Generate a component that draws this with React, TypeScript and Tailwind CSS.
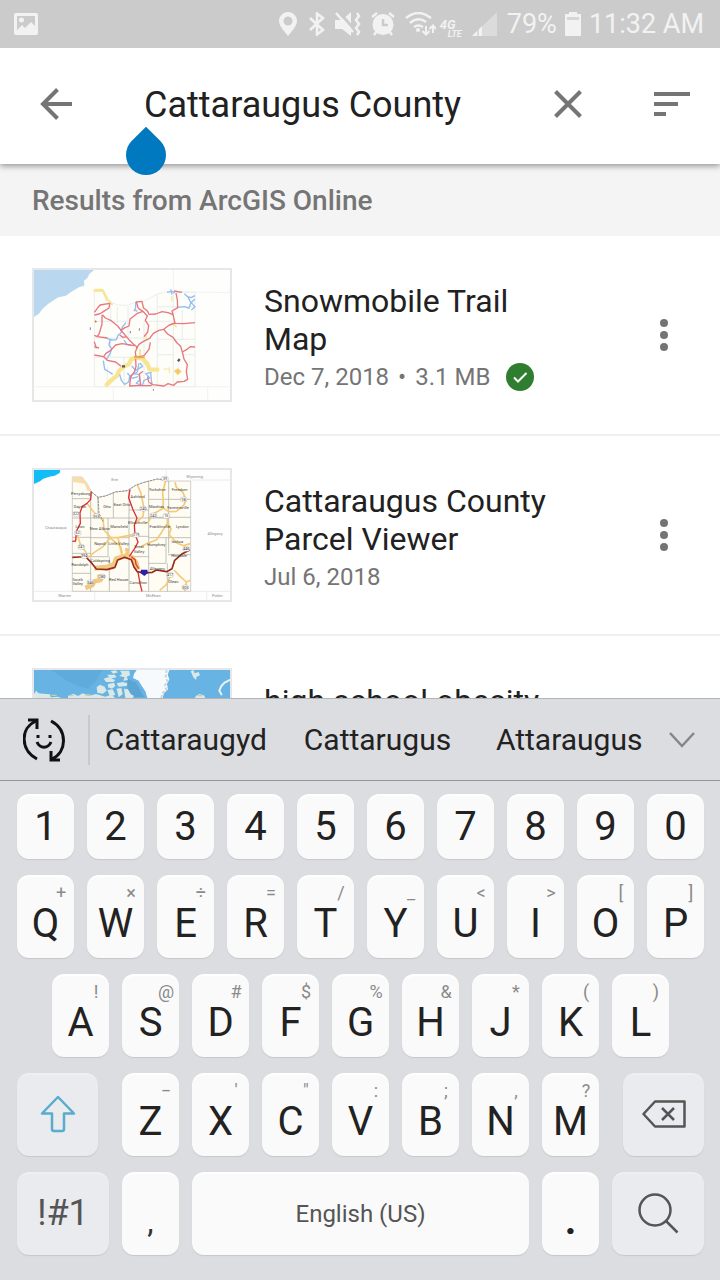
import React, { useState } from 'react';

const numberKeys = ['1', '2', '3', '4', '5', '6', '7', '8', '9', '0'];

const topKeys = [
  ['Q', '+'], ['W', '×'], ['E', '÷'], ['R', '='], ['T', '/'],
  ['Y', '_'], ['U', '<'], ['I', '>'], ['O', '['], ['P', ']'],
];

const homeKeys = [
  ['A', '!'], ['S', '@'], ['D', '#'], ['F', '$'], ['G', '%'],
  ['H', '&'], ['J', '*'], ['K', '('], ['L', ')'],
];

const bottomKeys = [
  ['Z', '−'], ['X', "'"], ['C', '"'], ['V', ':'], ['B', ';'], ['N', ','], ['M', '?'],
];

const suggestions = ['Cattaraugyd', 'Cattarugus', 'Attaraugus'];

// x, y and name of every label on the parcel map
const parcelLabels: [number, number, string][] = [
  [170, 104, 'Perrysburg'], [168, 143, 'Dayton'], [249, 145, 'Otto'], [294, 137, 'East Otto'],
  [341, 115, 'Ashford'], [400, 93, 'Yorkshire'], [467, 93, 'Freedom'], [398, 145, 'Machias'],
  [462, 147, 'Farmersville'], [168, 203, 'Leon'], [228, 210, 'New Albion'], [285, 205, 'Mansfield'],
  [341, 193, 'Ellicottville'], [408, 203, 'Franklinville'], [475, 205, 'Lyndon'], [228, 255, 'Napoli'],
  [284, 255, 'Little Valley'], [345, 264, 'Great'], [345, 278, 'Valley'], [397, 257, 'Humphrey'],
  [460, 249, 'Ischua'], [465, 290, 'Hinsdale'], [168, 317, 'Randolph'], [229, 305, 'Coldspring'],
  [400, 329, 'Allegany'], [448, 370, 'Olean'], [161, 363, 'South'], [161, 376, 'Valley'],
  [284, 363, 'Red House'], [343, 371, 'Carrollton'],
];

const neighbours: [number, number, string][] = [
  [272, 62, 'Erie'], [512, 53, 'Wyoming'], [95, 207, 'Chautauqua'], [573, 224, 'Allegany'],
  [122, 411, 'Warren'], [388, 411, 'McKean'], [580, 410, 'Potter'],
];

const routeShields: [number, number, string][] = [
  [423, 56, '39'], [479, 118, '98'], [357, 146, '240'], [388, 166, '242'], [427, 168, '16'],
  [156, 162, '322'], [217, 169, '353'], [161, 219, '62'], [336, 225, '219'], [172, 261, '241'],
  [181, 288, '394'], [234, 350, '280'], [199, 367, '346'], [438, 345, '417'], [487, 267, '446'],
  [484, 382, '305'],
];

const SnowmobileMap = () => (
  <svg viewBox="30 30 588 390" className="block h-full w-full" fill="none" aria-hidden="true">
    <rect x="30" y="30" width="588" height="390" fill="#fefefd" />
    <path d="M30 30H210L196 42 190 54 180 62 181 77 165 82 140 97 126 107 103 112 91 119 72 132 55 147 46 160 30 171Z" fill="#b9d8ef" />
    <path d="M448 30V95L618 98M618 80V98M30 380H618M268 380V420M551 380V420" stroke="#ebebec" strokeWidth="2" />
    <path d="M211 92H234L248 107 258 126 283 135 310 136 340 124 358 124 400 102 430 94 458 97H513V380H211Z" fill="#fdfdf9" stroke="#e4e7e6" strokeWidth="2" />
    <path d="M260 130V184M211 184H312M312 138V240M280 140V190M211 234H360M360 184V380M400 102V380M448 97V185M360 184H448M475 150V240M448 190V380M400 238H513M260 234V290M211 292H330M300 292V380M400 284H448M480 284H513M250 320V380M400 140H513" stroke="#e1e5e3" strokeWidth="2" />
    <g stroke="#f8e592" strokeLinejoin="round" strokeLinecap="round">
      <path d="M213 91H234" strokeWidth="9" />
      <path d="M238 94L249 119" strokeWidth="7" />
      <path d="M248 374L264 359 279 347 286 331 300 320 314 313 322 298 336 292 357 297 370 312 376 328 400 329" strokeWidth="13" />
      <path d="M348 293V270M255 122L264 133M448 190L456 199" strokeWidth="6" />
      <path d="M436 323V338M420 327H434" strokeWidth="3" />
      <path d="M451 332L462 325 472 334 462 345Z" fill="#f5c66f" strokeWidth="3" />
      <path d="M366 225V240M443 110V122" strokeWidth="4" />
    </g>
    <g stroke="#93bdf3" strokeWidth="4" strokeLinejoin="round">
      <path d="M248 235L264 240 277 239 282 226 291 219 295 201 306 188M258 240L255 255 263 266 258 281 247 299" />
      <path d="M330 154L335 143 335 126M340 154L330 148M429 97L445 94 452 100M440 88L444 104" />
      <path d="M481 101L491 110 501 113 513 107M459 142L482 140 495 145 501 127 513 140 502 150M491 110L501 128 513 117" />
      <path d="M238 302L242 328 256 336 266 343M287 343L292 361 302 373 314 366 317 349 340 336 345 309" />
      <path d="M330 341L346 344 347 360 337 370 355 377 360 361 377 354 365 341 383 337M323 318L335 331 356 319 348 309M300 240L309 254 322 257M310 340L325 355 342 350M380 340L384 376" />
    </g>
    <g stroke="#e9767d" strokeWidth="4" strokeLinejoin="round">
      <path d="M211 157L220 145 228 135 257 130 255 144 238 155 226 162 211 165M235 164L244 174 260 181 270 189 281 198 289 208 303 225 315 239 328 252 340 262 334 276 336 292" />
      <path d="M289 212L303 203 315 198 318 177 330 168 340 160 357 154 343 145 337 126 354 124 358 143 371 154 375 163 396 162 414 155 432 158 447 164 444 153 461 143 460 120 456 99" />
      <path d="M357 154L370 168 364 181 374 197 371 216 360 230M447 164L453 189 436 195 419 208 405 211 388 220 377 235 357 245 345 253 337 265M453 190L480 191 513 188" />
      <path d="M419 208L431 222 447 232 459 249 470 259 475 276 489 268 499 260 513 261M475 276L480 297 490 314 487 335 491 358 480 364 460 366 449 376 432 371 420 378 386 374 374 366" />
      <path d="M234 165L234 192 226 220 220 230 211 226M220 230L250 234M211 260L225 264M211 285L239 290 246 280 260 271 275 255 294 251 332 257M239 290L250 301 275 306 291 319M335 297L336 320 331 336 320 350 317 378 350 376 346 342 357 334M350 376L383 377M336 292L360 287 375 268 379 247" />
      <path d="M287 225L297 232 307 230M450 93L474 97M217 265L211 245M374 366L371 350" />
    </g>
    <path d="M199 202V210M346 205V212M319 213V220M388 387V392" stroke="#7f80ae" strokeWidth="3" />
    <path d="M213 182L217 187" stroke="#d97a3c" strokeWidth="5" />
    <path d="M294 319H303M462 304L467 297" stroke="#555760" strokeWidth="7" />
    <path d="M330 292H362" stroke="#eba950" strokeWidth="5" />
  </svg>
);

const ParcelMap = () => (
  <svg viewBox="30 30 588 390" className="block h-full w-full" fill="none" aria-hidden="true">
    <rect x="30" y="30" width="588" height="390" fill="#fefefe" />
    <path d="M30 30H109L107 39 92 47 76 50 58 56 48 64 30 72Z" fill="#12bdf5" />
    <path d="M427 30V58M618 60H500M30 394H618M212 394V420M548 394V420" stroke="#e2e2e2" strokeWidth="2" />
    <path d="M145 51H174L190 72 203 96 222 112 244 108 274 96 310 92 335 76 360 67 400 57 425 63H500V394H145Z" fill="#fffdf3" stroke="#b9b9b3" strokeWidth="2" />
    <path d="M145 51H174L190 72 203 96 190 92 182 71 145 65Z" fill="#f5deaa" />
    <path d="M145 116H200M200 94V310M222 112V174M268 98V174M145 174H432M315 92V394M374 65V394M434 63V280M252 174V290M200 233H315M315 229H374M315 150H374M374 118H500M374 172H500M145 232H200M374 233H500M426 233V310M200 290H252M256 290V394M145 340H200M200 310V394M315 290H374M374 310H426M145 280H200M432 284H500M430 310V394" stroke="#a5a69f" strokeWidth="2" />
    <g stroke="#f3ca78" strokeWidth="5" strokeLinejoin="round">
      <path d="M340 75L350 97 355 120 360 145 357 169 336 188M425 63L416 95 418 130 414 147 391 160 369 190M416 143L434 155 457 154 479 136 486 121 477 97 457 82 453 67" />
      <path d="M430 170L430 190 414 215 397 240 374 248 350 260M430 188L441 207 435 224 459 249 479 257 499 251M237 174L240 210 260 232 282 233 330 223" />
      <path d="M260 232L238 259 211 277 192 292M282 233L287 257 294 288M160 225L170 256 187 278M189 130L210 157 236 180M260 235L290 260 295 280M450 330L469 350 487 366 499 361M487 366L482 394M438 350L427 374 407 391" />
    </g>
    <g stroke="#f0ca80" strokeLinejoin="round">
      <path d="M211 325L250 321 270 313 277 296 300 289 323 292 336 308 342 329" strokeWidth="15" />
      <path d="M225 343L230 360 212 364 205 375 184 384" strokeWidth="14" />
      <path d="M303 268L312 270 307 285" strokeWidth="10" />
    </g>
    <g strokeWidth="4" strokeLinejoin="round">
      <path d="M202 94L200 118 189 130 175 139 168 158 169 190 157 214 155 243 145 244M318 88L314 113 327 149 339 174 331 196 333 223 342 246 333 264 316 289M342 336L348 370 354 394" stroke="#df2d35" />
      <path d="M145 292L166 291 186 291 201 307 217 327 249 329 273 322 281 300 302 292 322 299 330 321 340 335 360 339 385 337 397 330 428 335 444 326 452 301 475 281 497 270" stroke="#9a291c" strokeWidth="5" />
      <path d="M322 290L334 300 336 313 344 326" stroke="#d8402c" />
    </g>
    <path d="M203 96L222 112 244 108 274 96 310 92 335 76 360 67 400 57 425 59M222 112L225 160 237 184" stroke="#8f8f8f" strokeWidth="3" strokeDasharray="7 3" />
    <path d="M351 329H370L372 339 361 348 349 339Z" fill="#2a22a4" />
    <g fill="#fff" stroke="#8b8b8b" strokeWidth="1">
      {routeShields.map(([x, y, n]) => (
        <rect key={n} x={x - 10} y={y - 7} width="20" height="14" rx="6" />
      ))}
    </g>
    <g fontFamily="Roboto, sans-serif" fontSize="11" textAnchor="middle">
      <g fill="#333">
        {routeShields.map(([x, y, n]) => <text key={n} x={x} y={y + 4}>{n}</text>)}
      </g>
      <g fill="#3d3d3d" fontSize="12">
        {parcelLabels.map(([x, y, name], i) => <text key={i} x={x} y={y}>{name}</text>)}
      </g>
      <g fill="#8d8d8d" fontSize="12">
        {neighbours.map(([x, y, name]) => <text key={name} x={x} y={y}>{name}</text>)}
      </g>
    </g>
  </svg>
);

const WorldMap = () => (
  <svg viewBox="18 24 588 390" className="block h-full w-full" fill="none" aria-hidden="true">
    <rect x="18" y="24" width="588" height="390" fill="#67b4e4" />
    <path d="M70 24H222L205 56 180 80 150 72 120 58ZM150 24H225L212 40 190 60 160 66Z" fill="#5fabdb" />
    <path d="M298 50L325 62 348 106H300Z" fill="#5ba5d5" />
    {/* Greenland */}
    <path d="M326 24H424L419 38 424 52 417 66 420 82 408 94 404 108H358L352 88 340 70 332 56 315 48 318 36Z" fill="#f7fafc" />
    <path d="M416 24L413 44 418 58 411 70 415 84 403 94 400 108" stroke="#c9d6dc" strokeWidth="6" strokeDasharray="9 5" />
    {/* Arctic islands */}
    <g fill="#dbe8e6">
      <path d="M248 28L262 25 270 31 256 35ZM276 26H304L306 40 296 44 300 54 286 56 290 46 274 42 282 36ZM238 38L260 38 266 46 246 50ZM227 50L240 46 262 54 256 60 234 60ZM206 76L216 68 230 74 236 86 224 95 208 92ZM240 66L258 62 262 72 252 80 240 76ZM266 64L284 60 298 64 296 72 272 74ZM238 84L254 82 262 98 246 104ZM266 80L280 78 284 96 272 106ZM288 80L300 82 308 96 318 102 314 108H292Z" />
      <path d="M18 96L24 86 32 94 46 95 66 97 68 106 90 104 100 108H18ZM120 102L136 95 150 102 164 94 184 101 204 96 232 104 250 98 262 108H120Z" />
      <path d="M488 28L496 24 500 34 512 30 516 40 506 44 504 54 496 46ZM504 102L514 96 528 100 532 108H500Z" />
    </g>
    <path d="M70 100H86M126 101H136M172 99H188M510 101H524" stroke="#c5cda4" strokeWidth="4" />
    <path d="M606 54L590 62 580 72 574 86 580 97" stroke="#eaf2f6" strokeWidth="6" strokeLinecap="round" />
    <path d="M18 108H606V414H18Z" fill="#dfe5d8" />
  </svg>
);

const StatusBar = () => (
  <header className="relative z-20 flex h-12 shrink-0 items-center justify-between bg-[#cbcbcb] pr-4 pl-[14px] text-[#f2f2f2]">
    <svg width="24" height="22" viewBox="0 0 24 22" aria-hidden="true">
      <path fillRule="evenodd" fill="currentColor" d="M2 0H22Q24 0 24 2V20Q24 22 22 22H2Q0 22 0 20V2Q0 0 2 0ZM3 3V17L8 12 11 15 17 9 21 13V3ZM7.500 4.500A2.500 2.500 0 1 1 7.500 9.500A2.500 2.500 0 1 1 7.500 4.500Z" />
    </svg>
    <div className="flex items-center">
      <svg width="18" height="24" viewBox="0 0 18 24" className="mr-3" aria-hidden="true">
        <path fillRule="evenodd" fill="currentColor" d="M9 0C14 0 18 4 18 9C18 14 12 20 9 24C6 20 0 14 0 9C0 4 4 0 9 0ZM9 4.500A4.500 4.500 0 1 0 9 13.500A4.500 4.500 0 1 0 9 4.500Z" />
      </svg>
      <svg width="16" height="24" viewBox="0 0 16 24" fill="none" stroke="currentColor" strokeWidth="2.500" className="mr-2.5" aria-hidden="true">
        <path d="M1 6L14 18 8 22.500V1.500L14 6 1 18" />
      </svg>
      <svg width="26" height="24" viewBox="0 0 26 24" fill="none" stroke="currentColor" className="mr-2.5" aria-hidden="true">
        <path d="M0 8H7L16 0V24L7 17H0Z" fill="currentColor" stroke="none" />
        <path d="M4 0L19 17" stroke="#cbcbcb" strokeWidth="3" />
        <path d="M1 1L18 20" strokeWidth="2.500" />
        <path d="M22 1L24 4 21 8 24 12 21 16 24 20 22 23" strokeWidth="2.500" />
      </svg>
      <svg width="24" height="24" viewBox="0 0 24 24" fill="none" stroke="currentColor" className="mr-2.5" aria-hidden="true">
        <circle cx="12" cy="12.500" r="10.500" fill="currentColor" stroke="none" />
        <path d="M1 5L6 1M23 5L18 1M3 23L6 19M21 23L18 19" strokeWidth="2.500" />
        <path d="M12 7V13H17" stroke="#cbcbcb" strokeWidth="2.500" />
      </svg>
      <svg width="31" height="24" viewBox="0 0 31 24" fill="none" stroke="currentColor" strokeWidth="2.500" className="mr-1" aria-hidden="true">
        <path d="M1 6Q13 -4 26 6M5 11Q13 4 21 10M9 15Q13 12 18 15" />
        <circle cx="13" cy="18" r="2" fill="currentColor" stroke="none" />
        <path d="M21 14V22M17.500 19L21 22.500 24.500 19M28 21V14M24.500 17L28 13.500 31 17" strokeWidth="2" />
      </svg>
      <div className="mr-2.5 flex flex-col pt-2 font-bold italic">
        <span className="text-[13px] leading-[11px]">4G</span>
        <span className="pl-2 text-[9px] leading-2">LTE</span>
      </div>
      <svg width="25" height="24" viewBox="0 0 25 24" className="mr-2.5" fill="currentColor" aria-hidden="true">
        <path d="M25 0V24H0Z" opacity="0.4" />
        <path d="M5 19V24H0ZM10 14V24H7V17Z" />
      </svg>
      <span className="mr-2 text-[27px] leading-8">79%</span>
      <svg width="16" height="24" viewBox="0 0 16 24" className="mr-2" fill="currentColor" aria-hidden="true">
        <path d="M4 0H12V2H15Q16 2 16 3V23Q16 24 15 24H1Q0 24 0 23V3Q0 2 1 2H4Z" />
        <path d="M2 5H14V8H2Z" fill="#d6d6d6" />
      </svg>
      <span className="text-[27px] leading-8">11:32 AM</span>
    </div>
  </header>
);

type ResultProps = {
  title: string;
  date?: string;
  size?: string;
  downloaded?: boolean;
  children: React.ReactNode;
};

const Result = ({ title, date, size, downloaded, children }: ResultProps) => (
  <li className="flex border-b-2 border-[#f0f0f0] pl-8">
    <div className="my-8 h-[134px] w-[200px] shrink-0 border-2 border-[#e6e7e9]">{children}</div>
    <div className="min-w-0 flex-1 pt-[46px] pr-10 pl-8">
      <h2 className="text-[32px] leading-[38px] text-[#212121]">{title}</h2>
      <p className="flex items-center text-2xl leading-[38px] whitespace-nowrap text-[#757575]">
        {date}
        {size && <span className="mx-[9px]">•</span>}
        {size}
        {downloaded && (
          <svg width="28" height="28" viewBox="0 0 28 28" className="ml-4" role="img" aria-label="Downloaded">
            <circle cx="14" cy="14" r="14" fill="#2f7e30" />
            <path d="M8 14.500L12 18.500 20.500 10" fill="none" stroke="#fff" strokeWidth="2" />
          </svg>
        )}
      </p>
    </div>
    <button type="button" aria-label={`Options for ${title}`} className="flex w-28 shrink-0 items-center justify-center">
      <svg width="8" height="32" viewBox="0 0 8 32" fill="#757575">
        <circle cx="4" cy="4" r="4" />
        <circle cx="4" cy="16" r="4" />
        <circle cx="4" cy="28" r="4" />
      </svg>
    </button>
  </li>
);

const keyBase = 'flex min-w-0 items-center justify-center rounded-xl border-t-2 shadow-[0_1px_1px_#c6c7cb]';
const lightKey = `${keyBase} border-white bg-[#fafafa]`;
const greyKey = `${keyBase} border-[#eeeff2] bg-[#e9ebee] pb-1 text-[#555]`;
const letterKey = `${lightKey} relative h-[83px] flex-1 pt-3 leading-none`;

const LetterKey = ({ letter, hint, onPress }: { letter: string; hint: string; onPress: (s: string) => void }) => (
  <button type="button" onClick={() => onPress(letter)} className={`${letterKey} text-[40px] text-[#222]`}>
    <span className="absolute top-1.5 right-0 w-[26px] text-center text-lg leading-5 text-[#8a8a8a]">{hint}</span>
    {letter}
  </button>
);

export default function App() {
  const [query, setQuery] = useState('Cattaraugus County');
  const type = (s: string) => setQuery(q => q + s);

  return (
    <div className="flex h-screen flex-col overflow-hidden bg-white font-[Roboto,sans-serif]">
      <StatusBar />

      {/* Search bar */}
      <form
        id="search"
        role="search"
        onSubmit={e => e.preventDefault()}
        className="relative z-10 flex h-[116px] shrink-0 items-stretch bg-white pb-1 shadow-[0_2px_6px_rgba(0,0,0,0.4)]"
      >
        <button type="button" aria-label="Back" className="flex w-28 items-center justify-center">
          <svg width="32" height="32" viewBox="0 0 32 32" fill="none" stroke="#757575" strokeWidth="4">
            <path d="M32 16H3M17.500 1.500L3 16 17.500 30.500" />
          </svg>
        </button>
        <input
          type="text"
          aria-label="Search maps"
          value={query}
          onChange={e => setQuery(e.target.value)}
          className="min-w-0 flex-1 pt-0.5 pl-8 text-4xl text-[#212121] outline-none"
        />
        <button type="button" aria-label="Clear" onClick={() => setQuery('')} className="flex w-28 items-center justify-center">
          <svg width="28" height="28" viewBox="0 0 28 28" fill="none" stroke="#757575" strokeWidth="4">
            <path d="M1.500 1.500L26.500 26.500M26.500 1.500L1.500 26.500" />
          </svg>
        </button>
        <button type="button" aria-label="Sort" className="flex w-24 items-center justify-center">
          <svg width="36" height="24" viewBox="0 0 36 24" fill="#757575">
            <path d="M0 0H36V4H0ZM0 10H24V14H0ZM0 20H12V24H0Z" />
          </svg>
        </button>
        {/* Cursor handle */}
        <span className="absolute top-[87px] left-[126px] size-10 rotate-45 rounded-full rounded-tl-none bg-[#0079c1]" aria-hidden="true" />
      </form>

      {/* Results */}
      <main className="flex min-h-0 flex-1 flex-col">
        <h1 className="h-[72px] shrink-0 bg-[#f4f4f4] px-8 text-[28px] leading-[74px] font-medium text-[#757575]">
          Results from ArcGIS Online
        </h1>
        <ul className="min-h-0 flex-1 overflow-y-auto [scrollbar-width:none]">
          <Result title="Snowmobile Trail Map" date="Dec 7, 2018" size="3.1 MB" downloaded>
            <SnowmobileMap />
          </Result>
          <Result title="Cattaraugus County Parcel Viewer" date="Jul 6, 2018">
            <ParcelMap />
          </Result>
          <Result title="high school obesity">
            <WorldMap />
          </Result>
        </ul>
      </main>

      {/* Keyboard */}
      <section aria-label="Keyboard" className="shrink-0 bg-[#dcdde1]">
        <div className="flex h-[83px] items-center border-t border-b border-t-[#b3b4b8] border-b-[#949599] text-[30px] text-[#222]">
          <button type="button" aria-label="Emoji" className="flex w-[88px] justify-center">
            <svg width="42" height="44" viewBox="0 0 42 44" fill="none" stroke="#111" strokeWidth="3">
              <path d="M13 3C-3 10 -3 32 14 41M28 3C45 12 44 34 29 41" />
              <path d="M5 2H14V11M37 42H28V33" />
              <path d="M14 24C17 31 25 31 28 24" />
              <path d="M15 17V20M27 17V20" />
            </svg>
          </button>
          <div className="h-[50px] w-0.5 bg-[#c8c9cc]" />
          <div className="flex flex-1">
            {suggestions.map(word => (
              <button key={word} type="button" onClick={() => setQuery(word)} className="flex-1">
                {word}
              </button>
            ))}
          </div>
          <button type="button" aria-label="More suggestions" className="flex w-[55px] pl-1">
            <svg width="26" height="16" viewBox="0 0 26 16" fill="none" stroke="#85868a" strokeWidth="2.500">
              <path d="M1 1L13 14 25 1" />
            </svg>
          </button>
        </div>

        <div className="flex flex-col gap-4 pt-[13px] pr-4 pb-[25px] pl-[17px]">
          <div className="flex gap-[13px]">
            {numberKeys.map(n => (
              <button key={n} type="button" onClick={() => type(n)} className={`${lightKey} h-[65px] flex-1 pb-0.5 text-[40px] leading-none text-[#222]`}>
                {n}
              </button>
            ))}
          </div>
          <div className="flex gap-[13px]">
            {topKeys.map(([k, hint]) => <LetterKey key={k} letter={k} hint={hint} onPress={type} />)}
          </div>
          <div className="flex gap-[13px] px-[35px]">
            {homeKeys.map(([k, hint]) => <LetterKey key={k} letter={k} hint={hint} onPress={type} />)}
          </div>
          <div className="grid grid-cols-[81fr_477fr_81fr] gap-6">
            <button type="button" aria-label="Shift" className={greyKey}>
              <svg width="36" height="38" viewBox="0 0 36 38" fill="none" stroke="#5aaccd" strokeWidth="2.500" strokeLinejoin="round">
                <path d="M18 2L34 18.500H24V34Q24 36 22 36H14Q12 36 12 34V18.500H2Z" />
              </svg>
            </button>
            <div className="flex gap-[13px]">
              {bottomKeys.map(([k, hint]) => <LetterKey key={k} letter={k} hint={hint} onPress={type} />)}
            </div>
            <button type="button" aria-label="Backspace" onClick={() => setQuery(q => q.slice(0, -1))} className={greyKey}>
              <svg width="44" height="28" viewBox="0 0 44 28" fill="none" stroke="#555" strokeWidth="2.500" strokeLinejoin="round">
                <path d="M13 1.500H42.500V26.500H13L1.500 14Z" />
                <path d="M20 8L32 20M32 8L20 20" />
              </svg>
            </button>
          </div>
          <div className="grid grid-cols-[92fr_57fr_337fr_57fr_92fr] gap-[13px]">
            <button type="button" className={`${greyKey} text-[36px]`}>!#1</button>
            <button type="button" onClick={() => type(',')} className={`${letterKey} text-[32px] text-[#333]`}>,</button>
            <button type="button" onClick={() => type(' ')} className={`${lightKey} pb-0.5 text-2xl text-[#555]`}>
              English (US)
            </button>
            <button type="button" onClick={() => type('.')} className={`${letterKey} text-[40px] font-bold text-[#222]`}>.</button>
            <button type="submit" form="search" aria-label="Search" className={greyKey}>
              <svg width="42" height="42" viewBox="0 0 42 42" fill="none" stroke="#555" strokeWidth="2.500">
                <circle cx="18" cy="18" r="15.500" />
                <path d="M29 29L40.500 40.500" />
              </svg>
            </button>
          </div>
        </div>
      </section>
    </div>
  );
}
